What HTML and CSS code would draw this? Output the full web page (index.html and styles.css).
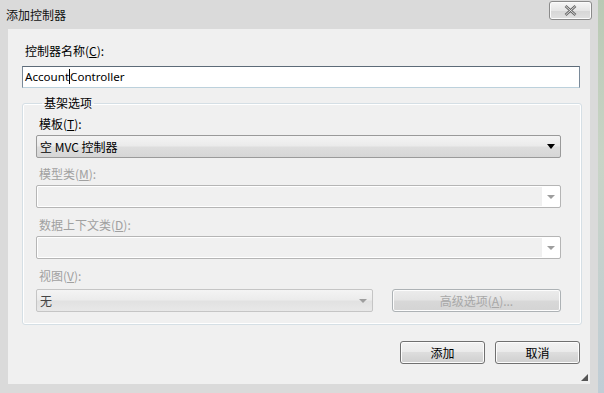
FILE: index.html
```html
<!DOCTYPE html>
<html lang="zh-CN">
<head>
  <meta charset="UTF-8">
  <title>添加控制器</title>
  <link rel="stylesheet" href="styles.css">
</head>
<body>
  <div class="window">
    <div class="titlebar">
      <span class="title">添加控制器</span>
      <button class="close-btn">
        <svg width="13" height="11" viewBox="0 0 13 11">
          <path d="M1.5 1 L11.5 10 M11.5 1 L1.5 10" stroke="#666" stroke-width="2.6" fill="none"/>
          <path d="M1.5 1 L11.5 10 M11.5 1 L1.5 10" stroke="#ececec" stroke-width="0.9" fill="none"/>
        </svg>
      </button>
    </div>

    <div class="client">
      <div class="label">控制器名称(<u>C</u>):</div>
      <div class="textbox">Account<span class="caret"></span>Controller</div>

      <fieldset class="group">
        <legend>基架选项</legend>

        <div class="label first">模板(<u>T</u>):</div>
        <div class="combo active">
          <span class="combo-text">空 MVC 控制器</span>
          <span class="arrow dark"></span>
        </div>

        <div class="label dim">模型类(<u>M</u>):</div>
        <div class="combo disabled">
          <span class="combo-text"></span>
          <span class="arrow-box"><span class="arrow light"></span></span>
        </div>

        <div class="label dim lower">数据上下文类(<u>D</u>):</div>
        <div class="combo disabled">
          <span class="combo-text"></span>
          <span class="arrow-box"><span class="arrow light"></span></span>
        </div>

        <div class="label dim lower">视图(<u>V</u>):</div>
        <div class="view-row">
          <div class="combo view-combo">
            <span class="combo-text">无</span>
            <span class="arrow light"></span>
          </div>
          <button class="btn advanced" disabled>高级选项(<u>A</u>)...</button>
        </div>
      </fieldset>

      <div class="footer">
        <button class="btn">添加</button>
        <button class="btn">取消</button>
      </div>
      <div class="grip"></div>
    </div>
  </div>
</body>
</html>
```

FILE: styles.css
```css
html, body {
  margin: 0;
  padding: 0;
  height: 100%;
  overflow: hidden;
}

body {
  background: linear-gradient(180deg, #b9c9b4 0%, #c9d4c6 40%, #c0cdd6 100%);
  font-family: "Noto Sans CJK SC", "Noto Sans", sans-serif;
  font-size: 12px;
  color: #000;
}

.window {
  width: 598px;
  height: 393px;
  background: #dadada;
  box-sizing: border-box;
  padding: 0 8px;
  display: flex;
  flex-direction: column;
}

.titlebar {
  height: 29px;
  display: flex;
  align-items: flex-start;
  justify-content: space-between;
}

.title {
  margin-left: -2px;
  margin-top: 6px;
  font-size: 12px;
  color: #111;
}

.close-btn {
  width: 43px;
  height: 19px;
  margin-top: 1px;
  margin-right: -2px;
  border: 1px solid #8a8a8a;
  border-radius: 3px;
  background: linear-gradient(180deg, #f6f6f6 0%, #e6e6e6 50%, #d6d6d6 51%, #e0e0e0 100%);
  box-shadow: inset 0 0 0 1px #fbfbfb;
  display: flex;
  align-items: center;
  justify-content: center;
  padding: 0;
}

.client {
  position: relative;
  height: 355px;
  background: #f0f0f0;
  padding: 14px 8px 0 14px;
  box-sizing: border-box;
}

.label {
  height: 16px;
  line-height: 16px;
  margin-left: 3px;
  color: #000;
}

.label u {
  text-decoration: underline;
  text-underline-offset: 1px;
}

.label.dim {
  color: #a0a0a0;
}

.textbox {
  margin-top: 7px;
  height: 22px;
  width: 558px;
  box-sizing: border-box;
  border: 1px solid #7a8a99;
  border-top-color: #5d6b78;
  border-bottom-color: #bcd1dc;
  background: #fff;
  padding-left: 2px;
  line-height: 20px;
  font-family: "Noto Sans", sans-serif;
  font-size: 11.6px;
}

.caret {
  display: inline-block;
  width: 1px;
  height: 15px;
  background: #000;
  vertical-align: -3px;
}

.group {
  margin: 8px 0 0 0;
  width: 559px;
  height: 229px;
  box-sizing: border-box;
  border: 1px solid #d5dfe5;
  border-radius: 3px;
  box-shadow: inset 0 0 0 1px #fff;
  padding: 6px 20px 0 13px;
}

.group legend {
  padding: 0 2px;
  margin-left: 6px;
  font-size: 12px;
  line-height: 14px;
}

.group .label {
  margin-left: 3px;
  margin-top: 8px;
}

.group .label.first {
  margin-top: 0;
}

.group .label.lower {
  margin-top: 9px;
}

.combo {
  margin-top: 3px;
  height: 23px;
  box-sizing: border-box;
  border: 1px solid #a8a8a8;
  border-radius: 2px;
  display: flex;
  align-items: center;
  position: relative;
}

.combo.active {
  border-color: #9a9a9a;
  background: linear-gradient(180deg, #f4f4f4 0%, #ebebeb 45%, #dddddd 55%, #d6d6d6 100%);
}

.combo.disabled {
  border-color: #b5b5b5;
  background: #f0f0f0;
  box-shadow: inset 0 0 0 1px #fff;
}

.combo-text {
  flex: 1;
  padding-left: 3px;
  line-height: 20px;
}

.arrow {
  width: 0;
  height: 0;
  border-left: 4px solid transparent;
  border-right: 4px solid transparent;
  margin-right: 5px;
}

.arrow.dark {
  border-top: 5px solid #000;
}

.arrow.light {
  border-top: 4px solid #9e9e9e;
}

.arrow-box {
  width: 17px;
  height: 19px;
  margin-right: 1px;
  background: #fff;
  display: flex;
  align-items: center;
  justify-content: center;
}

.arrow-box .arrow {
  margin-right: 0;
}

.view-row {
  margin-top: 5px;
  display: flex;
  gap: 19px;
}

.view-combo {
  margin-top: 0;
  width: 337px;
  border-color: #c5c5c5;
  background: linear-gradient(180deg, #f4f4f4 0%, #ececec 45%, #e2e2e2 55%, #e8e8e8 100%);
  color: #444;
}

.btn {
  height: 23px;
  box-sizing: border-box;
  border: 1px solid #707070;
  border-radius: 3px;
  background: linear-gradient(180deg, #f2f2f2 0%, #ebebeb 45%, #dddddd 50%, #cfcfcf 100%);
  box-shadow: inset 0 0 0 1px #fcfcfc;
  font-family: "Noto Sans CJK SC", "Noto Sans", sans-serif;
  font-size: 12px;
  color: #000;
  padding: 0;
}

.btn.advanced {
  width: 169px;
  border-color: #adb2b5;
  color: #a8a8a8;
  background: linear-gradient(180deg, #ececec 0%, #e4e4e4 45%, #d8d8d8 55%, #d4d4d4 100%);
}

.footer {
  margin-top: 16px;
  margin-right: 2px;
  display: flex;
  justify-content: flex-end;
  gap: 10px;
}

.footer .btn {
  width: 85px;
}

.grip {
  position: absolute;
  right: 2px;
  bottom: 3px;
  width: 0;
  height: 0;
  border-left: 7px solid transparent;
  border-bottom: 7px solid #555;
}
```
